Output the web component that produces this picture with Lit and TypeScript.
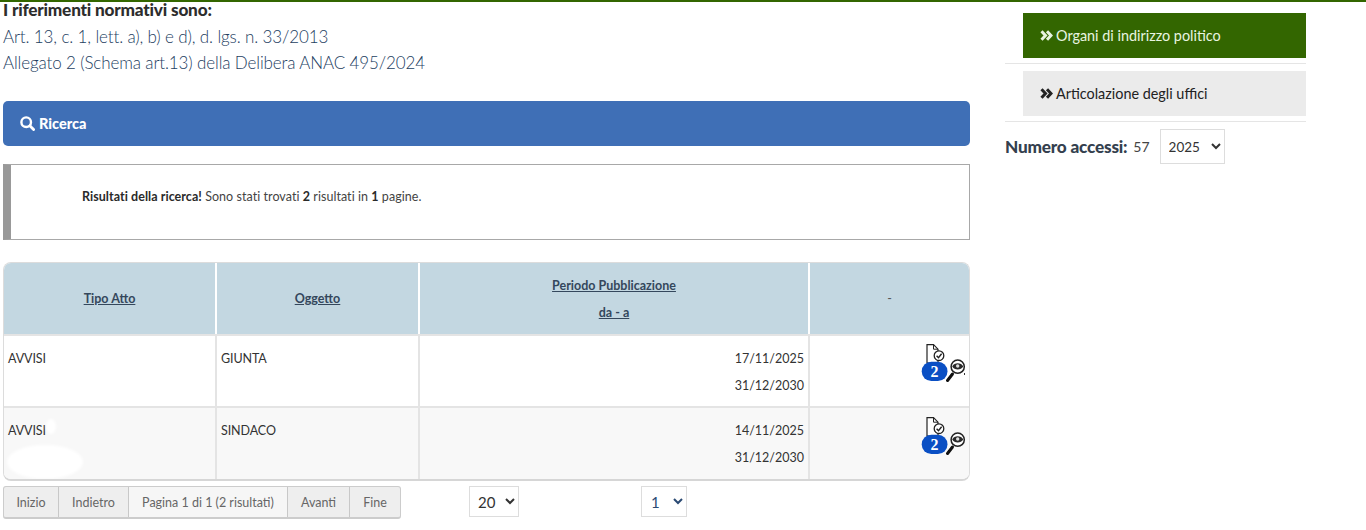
import { LitElement, html, css, svg } from "lit";
import { customElement } from "lit/decorators.js";

const chevrons = html`<svg class="chev" viewBox="0 0 13 11" width="13" height="11" aria-hidden="true"><path d="M1.5 1.2 5.5 5.5 1.5 9.8M7 1.2 11 5.5 7 9.8" fill="none" stroke="currentColor" stroke-width="3"/></svg>`;

const actionIcon = svg`
  <path d="M6 .7H12.5L17 5.2V19H6Z" fill="#fff" stroke="#222" stroke-width="1.2"/>
  <path d="M12.5 .7V5.2H17" fill="none" stroke="#222" stroke-width="1"/>
  <circle cx="18" cy="11.7" r="4.8" fill="#fff" stroke="#222" stroke-width="1.3"/>
  <path d="M15.6 11.7 17.5 13.7 20.6 9.7" fill="none" stroke="#222" stroke-width="1.4"/>
  <rect x=".7" y="17.7" width="25.8" height="19.3" rx="9.6" fill="#0a4fc4"/>
  <text x="13.6" y="32.5" text-anchor="middle" font-family="Liberation Serif, serif" font-weight="700" font-size="16" fill="#fff">2</text>
  <path d="M26.5 36.5 31.5 30" stroke="#111" stroke-width="3" stroke-linecap="round"/>
  <circle cx="36.7" cy="22.7" r="6.6" fill="#fff" stroke="#222" stroke-width="1.5"/>
  <path d="M31.2 22.5C33.2 18.3 40.2 18.3 42.2 22.5 40.2 26.5 33.2 26.5 31.2 22.5Z" fill="#2a2a2a"/>
  <circle cx="36.7" cy="22" r="1.7" fill="#ddd"/>
`;

@customElement("app-root")
export class AppRoot extends LitElement {
  static styles = css`
    :host {
      display: block;
      height: 530px;
      overflow: hidden;
      background: #fff;
      border-top: 2px solid #336600;
      box-sizing: border-box;
      font-family: "Lato", "Open Sans", sans-serif;
      color: #333;
    }
    .page { display: flex; padding-left: 3px; }
    .main { width: 967px; flex: none; }
    .side { width: 301px; margin-left: 35px; flex: none; padding-top: 11px; }

    .refs-title { font-size: 17.2px; font-weight: 900; line-height: 16px; color: #2d2d2d; letter-spacing: -0.2px; }
    .refs { margin-top: 6px; font-size: 17px; font-weight: 300; line-height: 26px; color: #24405f; letter-spacing: -0.13px; }

    .search {
      margin-top: 25px; height: 45px; background: #3f6fb6; border-radius: 5px;
      display: flex; align-items: center; gap: 4px; padding-left: 17px;
      color: #fff; font-weight: 900; font-size: 14.5px;
    }
    .search svg { flex: none; }

    .alert {
      margin-top: 18px; height: 76px; box-sizing: border-box;
      border: 1px solid #a8a8a8; border-left: 8px solid #999;
      padding: 23px 0 0 71px; font-size: 12.5px; line-height: 17px; color: #444; letter-spacing: 0.05px;
    }
    .alert b { color: #2a2a2a; }

    .tbl-wrap {
      margin-top: 22px; border: 1px solid #dcdcdc; border-bottom: 2px solid #d6d6d6;
      border-radius: 8px; overflow: hidden; width: 967px; box-sizing: border-box;
    }
    table { border-collapse: collapse; table-layout: fixed; width: 100%; font-size: 12.5px; }
    col.c1 { width: 212px; } col.c2 { width: 203px; } col.c3 { width: 390px; }
    th {
      height: 71px; padding: 0; background: #c3d7e1; color: #34475c;
      font-size: 12.5px; font-weight: 700; text-decoration: underline;
      border-left: 2px solid #fff; border-bottom: 2px solid #e4e4e4;
      line-height: 27px;
    }
    th:first-child { border-left: 0; }
    th.plain { text-decoration: none; font-weight: 400; color: #555; }
    td {
      height: 70px; padding: 0; vertical-align: top; color: #333;
      border-left: 2px solid #e4e4e4; border-bottom: 2px solid #e4e4e4;
    }
    td:first-child { border-left: 0; }
    tr:last-child td { border-bottom: 0; height: 71px; }
    tr.alt td { background: #f8f8f8; }
    .txt { display: block; padding: 14px 0 0 4px; line-height: 17px; position: relative; letter-spacing: -0.1px; }
    .dates { display: block; padding: 9px 4px 0 0; text-align: right; line-height: 27px; }
    .act { position: relative; }
    .act svg { position: absolute; left: 111px; top: 8px; }
    tr.alt .act svg { top: 9px; }
    .dot { position: absolute; left: 154px; top: 37px; width: 1px; height: 2px; background: #333; }
    .blob {
      position: absolute; left: 3px; top: 37px; width: 76px; height: 34px;
      border-radius: 50%; background: #fff; filter: blur(1.5px);
    }
    .blob.small { left: 42px; top: 11px; width: 10px; height: 15px; }

    .foot { display: flex; margin-top: 5px; align-items: flex-start; }
    .pager {
      display: flex; height: 33px; box-sizing: border-box; width: 398px; flex: none;
      border: 1px solid #ccc; border-bottom-width: 2px; border-radius: 3px;
      background: #eeeeee; font-size: 12.5px; color: #666;
    }
    .pager span { display: flex; align-items: center; justify-content: center; border-left: 1px solid #c8c8c8; box-sizing: border-box; }
    .pager span:first-child { border-left: 0; }
    .pager .p1 { width: 54px; } .pager .p2 { width: 70px; } .pager .p3 { width: 159px; background: #f6f6f6; }
    .pager .p4 { width: 62px; } .pager .p5 { flex: 1; }

    select {
      font-family: inherit; background: #fff; border: 1px solid #ddd; border-radius: 0; color: #333;
      box-sizing: border-box; padding: 0 0 0 8px; margin: 0;
    }
    .sel20 { width: 50px; height: 31px; margin-left: 68px; font-size: 15px; padding-left: 4px; }
    .sel1 { width: 46px; height: 31px; margin-left: 122px; font-size: 15px; color: #2b4a73; padding-left: 5px; }

    .nav { margin-left: 18px; width: 283px; height: 45px; box-sizing: border-box;
      display: flex; align-items: center; gap: 3px; padding-left: 17px; font-size: 14.4px; }
    .nav.on { background: #336600; color: #e9f5e0; }
    .nav.off { background: #ebebeb; color: #222; }
    .sep { border-top: 1px solid #e5e5e5; margin-top: 5px; margin-bottom: 7px; height: 0; }
    .chev { flex: none; }
    .access { display: flex; align-items: center; }
    .access b { font-size: 17.2px; font-weight: 900; color: #34404e; letter-spacing: -0.2px; }
    .access .n { font-size: 14px; margin-left: 6px; color: #444; }
    .access select { width: 65px; height: 35px; margin-left: 10px; font-size: 13.5px; padding-left: 4px; flex: none; }
  `;

  private row(tipo: string, ogg: string, d1: string, d2: string, alt: boolean) {
    return html`<tr class=${alt ? "alt" : ""}>
      <td><span class="txt">${tipo}${alt ? html`<i class="blob small"></i><i class="blob"></i>` : ""}</span></td>
      <td><span class="txt">${ogg}</span></td>
      <td><span class="dates">${d1}<br />${d2}</span></td>
      <td class="act"><svg width="46" height="42" viewBox="0 0 46 42" aria-hidden="true">${actionIcon}</svg>${alt ? "" : html`<i class="dot"></i>`}</td>
    </tr>`;
  }

  render() {
    return html`<div class="page">
      <div class="main">
        <div class="refs-title">I riferimenti normativi sono:</div>
        <div class="refs">Art. 13, c. 1, lett. a), b) e d), d. lgs. n. 33/2013<br />Allegato 2 (Schema art.13) della Delibera ANAC 495/2024</div>
        <div class="search">
          <svg width="15" height="15" viewBox="0 0 15 15" aria-hidden="true"><circle cx="6.2" cy="6.2" r="4.8" fill="none" stroke="#fff" stroke-width="2.4"/><path d="M9.8 9.8 13.6 13.6" stroke="#fff" stroke-width="2.8" stroke-linecap="round"/></svg>
          Ricerca
        </div>
        <div class="alert"><b>Risultati della ricerca!</b> Sono stati trovati <b>2</b> risultati in <b>1</b> pagine.</div>
        <div class="tbl-wrap">
          <table>
            <colgroup><col class="c1" /><col class="c2" /><col class="c3" /><col /></colgroup>
            <thead><tr><th>Tipo Atto</th><th>Oggetto</th><th>Periodo Pubblicazione<br />da - a</th><th class="plain">-</th></tr></thead>
            <tbody>
              ${this.row("AVVISI", "GIUNTA", "17/11/2025", "31/12/2030", false)}
              ${this.row("AVVISI", "SINDACO", "14/11/2025", "31/12/2030", true)}
            </tbody>
          </table>
        </div>
        <div class="foot">
          <div class="pager">
            <span class="p1">Inizio</span><span class="p2">Indietro</span><span class="p3">Pagina 1 di 1 (2 risultati)</span><span class="p4">Avanti</span><span class="p5">Fine</span>
          </div>
          <select class="sel20"><option>20</option></select>
          <select class="sel1"><option>1</option></select>
        </div>
      </div>
      <div class="side">
        <div class="nav on">${chevrons}Organi di indirizzo politico</div>
        <div class="sep"></div>
        <div class="nav off">${chevrons}Articolazione degli uffici</div>
        <div class="sep"></div>
        <div class="access"><b>Numero accessi:</b><span class="n">57</span><select><option>2025</option></select></div>
      </div>
    </div>`;
  }
}
